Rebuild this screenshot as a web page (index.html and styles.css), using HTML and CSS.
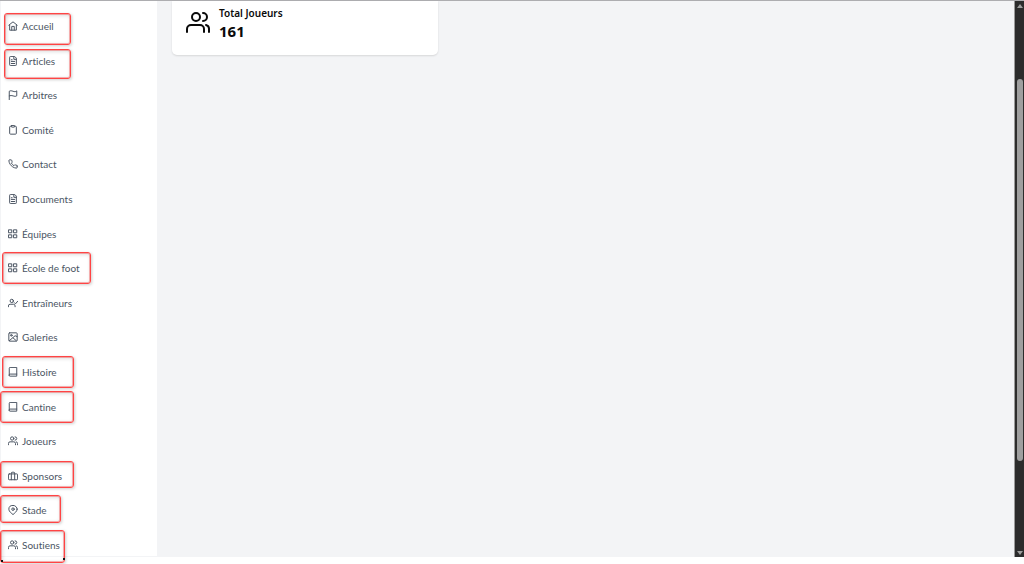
FILE: index.html
```html
<!DOCTYPE html>
<html lang="fr">
<head>
<meta charset="utf-8">
<title>Tableau de bord</title>
<link rel="stylesheet" href="styles.css">
</head>
<body>
<svg class="sprite" aria-hidden="true">
  <symbol id="home" viewBox="0 0 24 24"><path d="M2 10l10-8 10 8M4 10v12h16V10M9 22v-9h6v9"/></symbol>
  <symbol id="file" viewBox="0 0 24 24"><path d="M15 1H6a2 2 0 0 0-2 2v18a2 2 0 0 0 2 2h12a2 2 0 0 0 2-2V6zM14 2v6h6M8 9h2M8 13h8M8 18h8"/></symbol>
  <symbol id="flag" viewBox="0 0 24 24"><path d="M3 23V3c3-2 6-1 9 0s6 2 9-1v12c-3 2-6 1-9 0s-6-1-9 0"/></symbol>
  <symbol id="clipboard" viewBox="0 0 24 24"><rect x="8" y="1" width="8" height="4" rx="1"/><path d="M16 3h2a2 2 0 0 1 2 2v15a2 2 0 0 1-2 2H6a2 2 0 0 1-2-2V5a2 2 0 0 1 2-2h2"/></symbol>
  <symbol id="phone" viewBox="0 0 24 24"><path d="M22 16.9v3a2 2 0 0 1-2.2 2 19.8 19.8 0 0 1-8.600-3.100 19.500 19.500 0 0 1-6-6A19.800 19.800 0 0 1 2.100 4.200 2 2 0 0 1 4.100 2h3a2 2 0 0 1 2 1.700c.1 1 .4 1.900.7 2.800a2 2 0 0 1-.5 2.100L8.100 9.900a16 16 0 0 0 6 6l1.300-1.300a2 2 0 0 1 2.100-.4c.9.300 1.800.600 2.800.700a2 2 0 0 1 1.700 2z"/></symbol>
  <symbol id="grid" viewBox="0 0 24 24"><rect x="2" y="2" width="7" height="7"/><rect x="14" y="2" width="7" height="7"/><rect x="2" y="14" width="7" height="7"/><rect x="14" y="14" width="7" height="7"/></symbol>
  <symbol id="usercheck" viewBox="0 0 24 24"><circle cx="9" cy="7" r="4"/><path d="M1 21v-2a4 4 0 0 1 4-4h8a4 4 0 0 1 4 4v2M15 11l3 3 5-6"/></symbol>
  <symbol id="image" viewBox="0 0 24 24"><rect x="2" y="2" width="20" height="20" rx="2"/><circle cx="8" cy="8" r="2"/><path d="M22 11l-5-2L3 21M12 14l8 7"/></symbol>
  <symbol id="book" viewBox="0 0 24 24"><path d="M3 20V3a2 2 0 0 1 2-2h16v21H5a2.500 2.500 0 0 1 0-5h16"/></symbol>
  <symbol id="users" viewBox="0 0 24 24"><circle cx="10" cy="6" r="4"/><path d="M1 21v-3a4 4 0 0 1 4-4h9a4 4 0 0 1 4 4v3M17 2a4 4 0 0 1 0 8M23 21v-3a4 4 0 0 0-3-4"/></symbol>
  <symbol id="case" viewBox="0 0 24 24"><rect x="1" y="7" width="22" height="14" rx="2"/><path d="M8 21V5a2 2 0 0 1 2-2h4a2 2 0 0 1 2 2v16"/></symbol>
  <symbol id="pin" viewBox="0 0 24 24"><path d="M22 10c0 6-7 10-10 13-3-3-10-7-10-13a10 9 0 0 1 20 0z"/><circle cx="12" cy="10" r="3"/></symbol>
</svg>
<div class="app">
  <nav class="sidebar" aria-label="Navigation">
    <a href="#accueil"><svg class="icon"><use href="#home"/></svg>Accueil</a>
    <a href="#articles"><svg class="icon"><use href="#file"/></svg>Articles</a>
    <a href="#arbitres"><svg class="icon"><use href="#flag"/></svg>Arbitres</a>
    <a href="#comite"><svg class="icon"><use href="#clipboard"/></svg>Comité</a>
    <a href="#contact"><svg class="icon"><use href="#phone"/></svg>Contact</a>
    <a href="#documents"><svg class="icon"><use href="#file"/></svg>Documents</a>
    <a href="#equipes"><svg class="icon"><use href="#grid"/></svg>Équipes</a>
    <a href="#ecole"><svg class="icon"><use href="#grid"/></svg>École de foot</a>
    <a href="#entraineurs"><svg class="icon"><use href="#usercheck"/></svg>Entraîneurs</a>
    <a href="#galeries"><svg class="icon"><use href="#image"/></svg>Galeries</a>
    <a href="#histoire"><svg class="icon"><use href="#book"/></svg>Histoire</a>
    <a href="#cantine"><svg class="icon"><use href="#book"/></svg>Cantine</a>
    <a href="#joueurs"><svg class="icon"><use href="#users"/></svg>Joueurs</a>
    <a href="#sponsors"><svg class="icon"><use href="#case"/></svg>Sponsors</a>
    <a href="#stade"><svg class="icon"><use href="#pin"/></svg>Stade</a>
    <a href="#soutiens"><svg class="icon"><use href="#users"/></svg>Soutiens</a>
  </nav>
  <main class="content">
    <section class="card">
      <svg class="card-icon"><use href="#users"/></svg>
      <div>
        <h2 class="card-title">Total Joueurs</h2>
        <p class="card-value">161</p>
      </div>
    </section>
  </main>
  <div class="scrollbar" aria-hidden="true">
    <svg class="arrow" viewBox="0 0 6 4"><path d="M3 0l3 4H0z"/></svg>
    <div class="track"><div class="thumb"></div></div>
    <svg class="arrow" viewBox="0 0 6 4"><path d="M0 0h6L3 4z"/></svg>
  </div>
</div>
<div class="marks" aria-hidden="true">
  <span class="mark mark-accueil"></span>
  <span class="mark mark-articles"></span>
  <span class="mark mark-ecole"></span>
  <span class="mark mark-histoire"></span>
  <span class="mark mark-cantine"></span>
  <span class="mark mark-sponsors"></span>
  <span class="mark mark-stade"></span>
  <span class="mark mark-soutiens"></span>
</div>
</body>
</html>
```
FILE: styles.css
```css
* { box-sizing: border-box; }

body {
  margin: 0;
  min-height: 100vh;
  padding-bottom: 7px;
  display: flex;
  background: #fff;
  color: #0a0a0a;
  font-family: "Noto Sans", "Open Sans", sans-serif;
}

.sprite { position: absolute; width: 0; height: 0; }

.app {
  flex: 1;
  display: flex;
  border-top: 1px solid #adadb0;
}

.sidebar {
  width: 157px;
  flex: none;
  padding: 15px 8px 1px 7px;
  display: flex;
  flex-direction: column;
  justify-content: space-between;
  border-left: 1px solid #f3f4f6;
  border-bottom: 1px solid #f3f4f6;
}

.sidebar a {
  display: flex;
  align-items: center;
  gap: 4px;
  color: #4b5563;
  font-family: Lato, "Open Sans", sans-serif;
  font-size: 10px;
  font-variant-ligatures: none;
  line-height: 20px;
  text-decoration: none;
}

.icon,
.card-icon {
  flex: none;
  fill: none;
  stroke: currentColor;
  stroke-width: 2;
  stroke-linecap: round;
  stroke-linejoin: round;
}

.icon { width: 10px; height: 10px; stroke-width: 2.4; }
.card-icon { width: 24px; height: 24px; }

.content {
  flex: 1;
  padding: 0 15px;
  background: #f3f4f6;
}

.card {
  max-width: 266px;
  padding: 3px 14px 14px;
  display: flex;
  align-items: center;
  gap: 9px;
  background: #fff;
  border-radius: 0 0 5px 5px;
  box-shadow: 0 1px 2px #0000001f;
}

.card-title {
  margin: 0;
  font-size: 10px;
  line-height: 18px;
  font-weight: 600;
}

.card-value {
  margin: 0;
  font-size: 15px;
  line-height: 19px;
  font-weight: 700;
}

.scrollbar {
  width: 10px;
  flex: none;
  padding: 3px 1px 2px;
  display: flex;
  flex-direction: column;
  align-items: center;
  background: #2c2c2c;
  border-left: 1px solid #9b9b9b;
}

.arrow { width: 6px; height: 4px; fill: #9f9f9f; }

.track { flex: 1; width: 6px; padding-top: 71px; }

.thumb { height: 81%; border-radius: 3px; background: #9f9f9f; }

.mark {
  position: absolute;
  border: 1px solid #f44;
  border-radius: 3px;
  box-shadow: inset 0 0 0 1px #f4444466, 1px 1px 3px #00000030, inset 1px 1px 4px #00000030;
}

.mark-accueil { left: 4px; top: 13px; width: 67px; height: 32px; }
.mark-articles { left: 4px; top: 49px; width: 67px; height: 30px; }
.mark-ecole { left: 2px; top: 252px; width: 89px; height: 32px; }
.mark-histoire { left: 2px; top: 356px; width: 72px; height: 32px; }
.mark-cantine { left: 0; top: 391px; width: 74px; height: 32px; }
.mark-sponsors { left: 0; top: 461px; width: 74px; height: 27px; }
.mark-stade { left: 0; top: 495px; width: 61px; height: 28px; }
.mark-soutiens { left: 0; top: 530px; width: 65px; height: 33px; }

.mark-soutiens::before,
.mark-soutiens::after {
  content: "";
  position: absolute;
  width: 2px;
  height: 2px;
  background: #111;
}

.mark-soutiens::before { left: 0; bottom: 0; }
.mark-soutiens::after { right: -1px; bottom: 2px; }
```
